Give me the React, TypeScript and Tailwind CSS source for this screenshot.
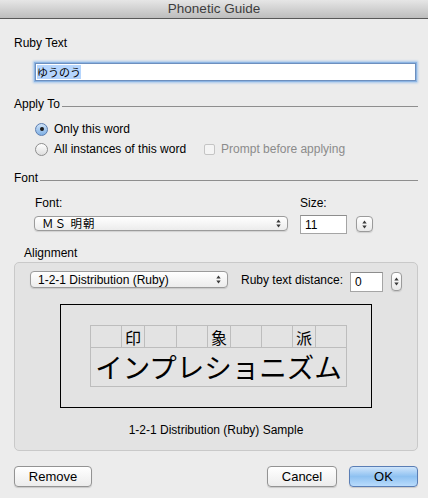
import React from "react";

const UI = "font-['Liberation_Sans','Noto_Sans_CJK_JP',sans-serif]";
const CJK = "font-['Noto_Sans_CJK_JP','Liberation_Sans',sans-serif]";

function UpDown({ className = "" }: { className?: string }) {
  return (
    <svg width="5" height="9" viewBox="0 0 5 9" className={className}>
      <path d="M2.5 0.5 L4.7 3.4 L0.3 3.4 Z" fill="#3a3a3a" />
      <path d="M2.5 8.5 L4.7 5.6 L0.3 5.6 Z" fill="#3a3a3a" />
    </svg>
  );
}

function Popup({ label, width, height, cjk }: { label: string; width: number; height: number; cjk?: boolean }) {
  return (
    <div
      className="flex items-center justify-between rounded-[4px] border border-[#9b9b9b] bg-linear-to-b from-[#ffffff] to-[#ececec] pl-[7px] pr-[6px] shadow-[0_1px_1px_rgba(0,0,0,0.12)]"
      style={{ width, height }}
    >
      <span className={`${cjk ? CJK + " text-[11.5px] tracking-[1px]" : "text-[12px]"} leading-none text-black`}>{label}</span>
      <UpDown />
    </div>
  );
}

function Stepper({ h, w }: { h: number; w: number }) {
  return (
    <div
      className="flex items-center justify-center rounded-[4px] border border-[#9b9b9b] bg-linear-to-b from-[#ffffff] to-[#e9e9e9] shadow-[0_1px_1px_rgba(0,0,0,0.12)]"
      style={{ width: w, height: h }}
    >
      <UpDown />
    </div>
  );
}

function Heading({ text }: { text: string }) {
  return (
    <div className="flex items-end">
      <span className="text-[12px] leading-[15px] text-black">{text}</span>
      <div className="ml-[2px] mb-[5px] h-px flex-1 bg-[#8e8e8e]" />
    </div>
  );
}

function Radio({ on }: { on?: boolean }) {
  return on ? (
    <div className="flex h-[13px] w-[13px] items-center justify-center rounded-full border border-[#5b7db0] bg-linear-to-b from-[#cfe3f8] to-[#7fb0e4]">
      <div className="h-[4px] w-[4px] rounded-full bg-[#1c1c1c]" />
    </div>
  ) : (
    <div className="h-[13px] w-[13px] rounded-full border border-[#8e8e8e] bg-linear-to-b from-[#ffffff] to-[#dedede]" />
  );
}

function Button({ label, w, primary }: { label: string; w: number; primary?: boolean }) {
  return (
    <div
      className={`flex h-[21px] items-center justify-center rounded-[4px] border text-[13px] leading-none text-black shadow-[0_1px_1px_rgba(0,0,0,0.15)] ${
        primary
          ? "border-[#5a7eb5] bg-linear-to-b from-[#cfe5fb] via-[#8ec1f1] to-[#b9dcfc]"
          : "border-[#939393] bg-linear-to-b from-[#ffffff] to-[#ececec]"
      }`}
      style={{ width: w }}
    >
      {label}
    </div>
  );
}

const rubyCols = [30, 22, 31, 30, 22, 30, 30, 22, 30];
const rubyText = ["", "印", "", "", "象", "", "", "派", ""];

export default function App() {
  return (
    <div className={`${UI} flex h-[498px] w-[428px] flex-col bg-[#ececec] text-black`}>
      {/* title bar */}
      <div className="flex h-[19px] items-center justify-center border-b border-[#585858] bg-linear-to-b from-[#e6e6e6] to-[#bdbdbd]">
        <span className="text-[13.5px] leading-none text-[#3d3d3d]">Phonetic Guide</span>
      </div>

      <div className="flex flex-col pl-[14px] pr-[10px]">
        {/* Ruby Text */}
        <div className="mt-[17px] text-[12px] leading-[15px]">Ruby Text</div>
        <div className="ml-[21px] mr-[2px] mt-[12px] flex h-[18px] items-center border border-[#6d8fbe] bg-white pl-[1px] shadow-[0_0_0_1px_#8db5e3,0_0_2px_2px_#a8c8ec]">
          <span className={`${CJK} bg-[#b5d5fd] text-[11px] leading-[14px] text-black`}>ゆうのう</span>
        </div>

        {/* Apply To */}
        <div className="mt-[16px]">
          <Heading text="Apply To" />
        </div>
        <div className="ml-[21px] mt-[7px] flex h-[20px] items-center">
          <Radio on />
          <span className="ml-[6px] text-[12px]">Only this word</span>
        </div>
        <div className="ml-[21px] flex h-[20px] items-center">
          <Radio />
          <span className="ml-[6px] text-[12px]">All instances of this word</span>
          <div className="ml-[18px] h-[11px] w-[11px] rounded-[2px] border border-[#c4c4c4] bg-[#f4f4f4]" />
          <span className="ml-[6px] text-[12px] text-[#8b8b8b]">Prompt before applying</span>
        </div>

        {/* Font */}
        <div className="mt-[12px]">
          <Heading text="Font" />
        </div>
        <div className="mt-[10px] flex text-[12px] leading-[15px]">
          <span className="ml-[21px] w-[265px]">Font:</span>
          <span>Size:</span>
        </div>
        <div className="mt-[4px] flex items-start">
          <div className="ml-[20px] mt-[1px]">
            <Popup label="ＭＳ 明朝" width={254} height={15} cjk />
          </div>
          <div className="ml-[12px] flex h-[19px] w-[47px] items-center border border-[#a5a5a5] border-t-[#8d8d8d] bg-white pl-[4px] text-[12px] leading-none">
            11
          </div>
          <div className="ml-[9px] mt-[1px]">
            <Stepper w={17} h={16} />
          </div>
        </div>

        {/* Alignment */}
        <div className="ml-[10px] mt-[12px] text-[12px] leading-[15px]">Alignment</div>
        <div className="mt-[1px] flex h-[189px] flex-col rounded-[5px] border border-[#c9c9c9] bg-[#e3e3e3] pl-[15px] pt-[8px]">
          <div className="flex h-[21px] items-start">
            <Popup label="1-2-1 Distribution (Ruby)" width={198} height={17} />
            <span className="ml-[13px] mt-[1px] text-[12px] leading-[17px]">Ruby text distance:</span>
            <div className="ml-[7px] mt-[1px] flex h-[20px] w-[33px] items-center border border-[#a5a5a5] border-t-[#8d8d8d] bg-white pl-[4px] text-[12px] leading-none">
              0
            </div>
            <div className="ml-[8px] mt-[1px]">
              <Stepper w={11} h={19} />
            </div>
          </div>

          {/* sample preview */}
          <div className="ml-[30px] mt-[12px] flex h-[104px] w-[312px] items-center justify-center border border-black">
            <div className="ml-[5px] flex flex-col gap-px bg-[#bdbdbd] p-px">
              <div className="flex gap-px">
                {rubyCols.map((w, i) => (
                  <div
                    key={i}
                    className={`${CJK} flex h-[21px] items-center justify-center bg-[#e3e3e3] text-[16px] leading-none text-black`}
                    style={{ width: w }}
                  >
                    {rubyText[i]}
                  </div>
                ))}
              </div>
              <div
                className={`${CJK} flex h-[38px] items-center justify-center bg-[#e3e3e3] text-[27.5px] leading-none text-black`}
              >
                インプレショニズム
              </div>
            </div>
          </div>

          <div className="mt-[15px] pr-[15px] text-center text-[12px] leading-[15px]">
            1-2-1 Distribution (Ruby) Sample
          </div>
        </div>

        {/* buttons */}
        <div className="mt-[15px] flex items-center">
          <Button label="Remove" w={78} />
          <div className="flex-1" />
          <Button label="Cancel" w={70} />
          <div className="ml-[12px]">
            <Button label="OK" w={69} primary />
          </div>
        </div>
      </div>
    </div>
  );
}
